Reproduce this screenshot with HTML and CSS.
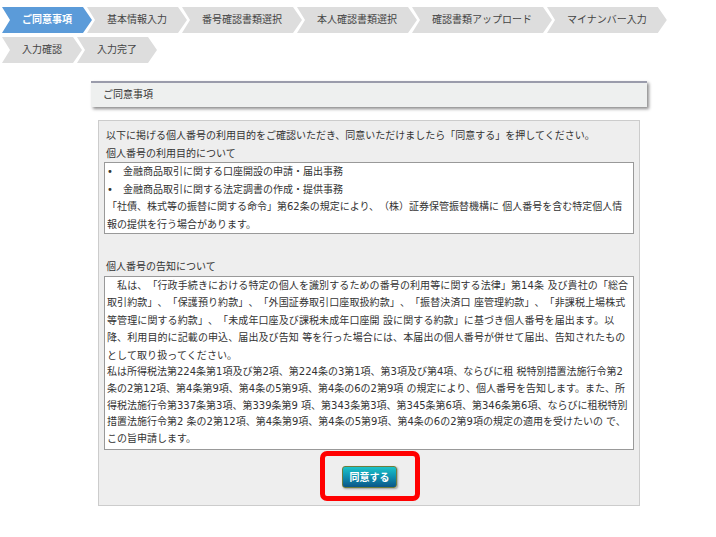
FILE: index.html
```html
<!DOCTYPE html>
<html lang="ja">
<head>
    <meta charset="UTF-8">
    <meta name="viewport" content="width=device-width, initial-scale=1.0">
    <title>ご同意事項</title>
    <link rel="stylesheet" href="styles.css">
</head>
<body>
    <ol class="steps">
        <li class="step active">ご同意事項</li>
        <li class="step">基本情報入力</li>
        <li class="step">番号確認書類選択</li>
        <li class="step">本人確認書類選択</li>
        <li class="step">確認書類アップロード</li>
        <li class="step">マイナンバー入力</li>
        <li class="step">入力確認</li>
        <li class="step">入力完了</li>
    </ol>

    <div class="content">
        <h2 class="section-title">ご同意事項</h2>

        <div class="panel">
            <p class="lead">以下に掲げる個人番号の利用目的をご確認いただき、同意いただけましたら「同意する」を押してください。</p>

            <p class="label">個人番号の利用目的について</p>
            <div class="text-box">
                <ul class="bullets">
                    <li>金融商品取引に関する口座開設の申請・届出事務</li>
                    <li>金融商品取引に関する法定調書の作成・提供事務</li>
                </ul>
                <p>「社債、株式等の振替に関する命令」第62条の規定により、（株）証券保管振替機構に 個人番号を含む特定個人情報の提供を行う場合があります。</p>
            </div>

            <p class="label gap">個人番号の告知について</p>
            <div class="text-box">
                <p class="loose">　私は、「行政手続きにおける特定の個人を識別するための番号の利用等に関する法律」第14条 及び貴社の「総合取引約款」、「保護預り約款」、「外国証券取引口座取扱約款」、「振替決済口 座管理約款」、「非課税上場株式等&#8288;管理に関する約款」、「未成年口座及び課税未成年口座開 設に関する約款」に基づき個人番号を届出ます。以降、利用目的に記載の申込、届出及び告知 等を行った場合には、本届出の個人番号が併せて届出、告知されたものとして取り扱ってください。</p>
                <p class="tight">私は所得税法第224条第1項及び第2項、第224条の3第1項、第3項及び第4項、ならびに租 税特別措置法施行令第2条の2第12項、第4条第9項、第4条の5第9項、第4条の6の2第9項 の規定により、個人番号を告知します。また、所得税法施行令第337条第3項、第339条第9 項、第343条第3項、第345条第6項、第346条第6項、ならびに租税特別措置法施行令第2 条の2第12項、第4条第9項、第4条の5第9項、第4条の6の2第9項の規定の適用を受けたいの で、この旨申請します。</p>
            </div>

            <div class="actions">
                <div class="highlight">
                    <button class="agree-btn" type="button">同意する</button>
                </div>
            </div>
        </div>
    </div>
</body>
</html>
```

FILE: styles.css
```css
* {
    margin: 0;
    padding: 0;
    box-sizing: border-box;
}

body {
    font-family: "DejaVu Sans", "Noto Sans CJK JP", sans-serif;
    font-size: 10px;
    color: #333;
    background: white;
    text-spacing-trim: space-all;
}

/* ステップ表示 */
.steps {
    list-style: none;
    display: flex;
    flex-wrap: wrap;
    row-gap: 4px;
    padding: 7px 0 0 2px;
    width: 716px;
}

.step {
    height: 26px;
    line-height: 26px;
    padding: 0 20px;
    background: #dddddd;
    color: #444;
    white-space: nowrap;
    clip-path: polygon(0 0, calc(100% - 9px) 0, 100% 50%, calc(100% - 9px) 100%, 0 100%, 8px 50%);
    margin-right: -5px;
}

.step.active {
    background: #5b9bd9;
    color: white;
    font-weight: bold;
}

.content {
    width: 556px;
    margin: 18px 0 0 91px;
}

.section-title {
    font-size: 10px;
    font-weight: normal;
    height: 26px;
    line-height: 23px;
    padding-left: 12px;
    background: #eef0ef;
    border-top: 2px solid #9a9cab;
    box-shadow: 2px 2px 3px rgba(0,0,0,0.45);
}

.panel {
    width: 542px;
    margin: 13px 0 0 7px;
    padding: 6px 5px 4px;
    background: #eeeeee;
    border: 1px solid #cccccc;
    line-height: 17.5px;
}

.lead,
.label {
    padding-left: 2px;
}

.label.gap {
    margin-top: 24px;
}

.text-box {
    background: white;
    border: 1px solid #999;
    padding: 0 1px 0 2px;
}

.text-box .loose {
    letter-spacing: 0.1px;
}

.text-box .tight {
    line-height: 16.8px;
    padding-bottom: 1px;
}

.bullets {
    list-style: none;
}

.bullets li::before {
    content: "•";
    display: inline-block;
    width: 16px;
}

.actions {
    display: flex;
    justify-content: center;
    padding: 1px 0 0 2px;
}

.highlight {
    width: 100px;
    height: 50px;
    border: 5px solid #ff0000;
    border-radius: 7px;
    padding: 10px 0 0 17px;
}

.agree-btn {
    width: 55px;
    height: 22px;
    font-family: inherit;
    font-size: 10px;
    font-weight: bold;
    color: white;
    border: 1px solid #6f7d3c;
    border-radius: 3px;
    background: linear-gradient(to bottom, #1bc3c9 0%, #0f8fae 50%, #0a5688 100%);
    box-shadow: 1px 1px 2px rgba(0,0,0,0.35);
    cursor: pointer;
}
```
